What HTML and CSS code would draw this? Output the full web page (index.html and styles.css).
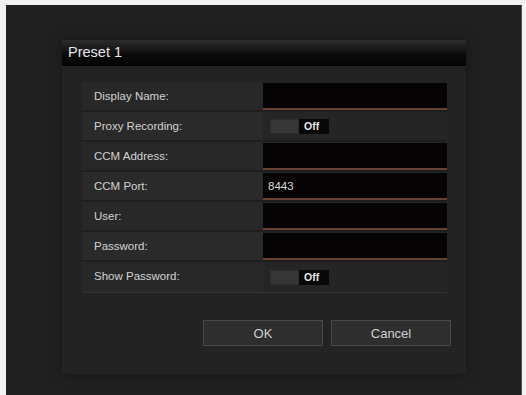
FILE: index.html
```html
<!DOCTYPE html>
<html>
<head>
<meta charset="utf-8">
<meta name="viewport" content="width=device-width, initial-scale=1.0">
<title>Preset 1</title>
<link rel="stylesheet" href="styles.css">
</head>
<body>
    <div class="screen">
        <div class="dialog">
            <div class="title">Preset 1</div>
            <div class="panel">
                <div class="form">
                    <div class="row">
                        <div class="label">Display Name:</div>
                        <div class="field"><div class="input"></div></div>
                    </div>
                    <div class="row">
                        <div class="label">Proxy Recording:</div>
                        <div class="field"><div class="toggle"><span class="knob"></span><span class="state">Off</span></div></div>
                    </div>
                    <div class="row">
                        <div class="label">CCM Address:</div>
                        <div class="field"><div class="input"></div></div>
                    </div>
                    <div class="row">
                        <div class="label">CCM Port:</div>
                        <div class="field"><div class="input">8443</div></div>
                    </div>
                    <div class="row">
                        <div class="label">User:</div>
                        <div class="field"><div class="input"></div></div>
                    </div>
                    <div class="row">
                        <div class="label">Password:</div>
                        <div class="field"><div class="input"></div></div>
                    </div>
                    <div class="row">
                        <div class="label">Show Password:</div>
                        <div class="field"><div class="toggle"><span class="knob"></span><span class="state">Off</span></div></div>
                    </div>
                </div>
                <div class="buttons">
                    <button>OK</button>
                    <button>Cancel</button>
                </div>
            </div>
        </div>
    </div>
</body>
</html>
```

FILE: styles.css
```css
*{
    font-family: 'Liberation Sans', Arial, sans-serif;
    box-sizing: border-box;
}
body{
    margin:0;
    background:#f2f2f2;
}
.screen{
    margin:5px 4px 0 6px;
    height:390px;
    background:#202020;
    border-right:1px solid #555;
    padding-top:35px;
    padding-left:56px;
}
.dialog{
    width:404px;
    box-shadow:0 0 12px rgba(0,0,0,0.35);
}
.title{
    height:26px;
    line-height:25px;
    padding-left:6px;
    font-size:14.5px;
    color:#e6e6e6;
    background:linear-gradient(#2c2c2c, #0a0a0a 60%, #030303);
}
.panel{
    background:#232323;
    padding:16px 15px 28px 20px;
}
.form{
    width:365px;
    border-bottom:1px solid #333;
}
.row{
    display:flex;
    height:30px;
    border-bottom:2px solid #1e1e1e;
}
.row:last-child{
    border-bottom:none;
}
.label{
    width:181px;
    background:#282828;
    color:#d2d2d2;
    font-size:11.5px;
    line-height:28px;
    padding-left:12px;
}
.row:nth-child(even) .label{
    background:#2a2a2a;
}
.field{
    flex:1;
    background:#252525;
    display:flex;
    align-items:center;
}
.input{
    width:100%;
    height:27px;
    margin-top:1px;
    align-self:flex-start;
    background:#050303;
    border-bottom:2px solid #654330;
    color:#dcdcdc;
    font-size:11.5px;
    line-height:26px;
    padding-left:5px;
}
.toggle{
    display:flex;
    height:15px;
    margin-left:7px;
}
.knob{
    width:29px;
    background:#363636;
    border:1px solid #2c2c2c;
}
.state{
    width:30px;
    background:#080808;
    color:#e6e6e6;
    font-size:10.5px;
    font-weight:bold;
    line-height:15px;
    padding-left:5px;
}
.buttons{
    display:flex;
    justify-content:flex-end;
    gap:8px;
    margin-top:27px;
}
button{
    width:120px;
    height:26px;
    background:#2e2e2e;
    border:1px solid #484848;
    color:#d0d0d0;
    font-size:13px;
    cursor:pointer;
}
button:hover{
    background:#363636;
}
```
